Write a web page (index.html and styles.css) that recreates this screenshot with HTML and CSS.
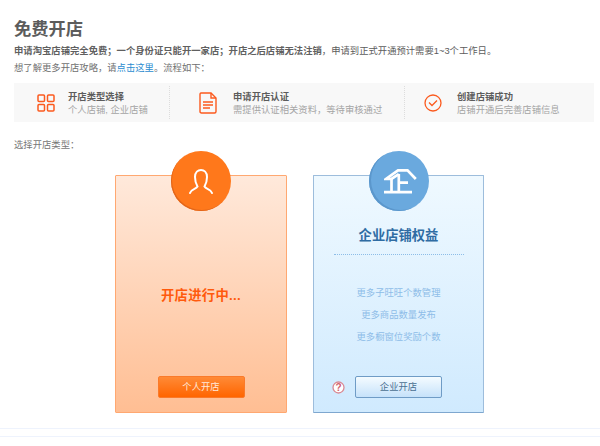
FILE: index.html
```html
<!DOCTYPE html>
<html lang="zh-CN">

<head>
    <meta charset="UTF-8">
    <title>免费开店</title>
    <link rel="stylesheet" href="styles.css">
</head>

<body>
    <div class="page">
        <h1 class="pageTitle">免费开店</h1>
        <p class="intro"><b>申请淘宝店铺完全免费；一个身份证只能开一家店；开店之后店铺无法注销</b>，申请到正式开通预计需要1~3个工作日。</p>
        <p class="intro introGuide">想了解更多开店攻略，请<a href="#">点击这里</a>。流程如下：</p>

        <div class="steps">
            <div class="step stepType">
                <svg class="stepIcon" width="18" height="18" viewBox="0 0 18 18" fill="none" stroke="#fb5a1e" stroke-width="1.5">
                    <rect x="1" y="1" width="6.5" height="6.5" rx="1"></rect>
                    <rect x="10.5" y="1" width="6.5" height="6.5" rx="1"></rect>
                    <rect x="1" y="10.5" width="6.5" height="6.5" rx="1"></rect>
                    <rect x="10.5" y="10.5" width="6.5" height="6.5" rx="1"></rect>
                </svg>
                <div class="stepText">
                    <div class="stepName">开店类型选择</div>
                    <div class="stepDesc">个人店铺, 企业店铺</div>
                </div>
            </div>
            <div class="step stepApply">
                <svg class="stepIcon" width="18" height="22" viewBox="0 0 18 22" fill="none" stroke="#fb5a1e" stroke-width="1.4">
                    <path d="M2 1H12L17 6V19.5Q17 21 15.500 21H2.500Q1 21 1 19.5V2.500Q1 1 2 1Z"></path>
                    <path d="M12 1V6H17"></path>
                    <path d="M4 10H14M4 13H14M4 16H11"></path>
                </svg>
                <div class="stepText">
                    <div class="stepName">申请开店认证</div>
                    <div class="stepDesc">需提供认证相关资料，等待审核通过</div>
                </div>
            </div>
            <div class="step stepDone">
                <svg class="stepIcon" width="18" height="18" viewBox="0 0 18 18" fill="none" stroke="#fb5a1e" stroke-width="1.3">
                    <circle cx="9" cy="9" r="8"></circle>
                    <path d="M5 8.500L8 11.500L13 6.500"></path>
                </svg>
                <div class="stepText">
                    <div class="stepName">创建店铺成功</div>
                    <div class="stepDesc">店铺开通后完善店铺信息</div>
                </div>
            </div>
        </div>

        <p class="chooseLabel">选择开店类型：</p>

        <div class="cards">
            <div class="card personal">
                <div class="cardBadge">
                    <svg width="24" height="25" viewBox="0 0 24 25" fill="none" stroke="#fff" stroke-width="2" stroke-linecap="round">
                        <path d="M1 24C2 20 7 20.500 8.500 17.500C7 15 6 12 6 8C6 3 9 1 12 1C15 1 18 3 18 8C18 12 17 15 15.500 17.500C17 20.500 22 20 23 24"></path>
                    </svg>
                </div>
                <div class="progress">开店进行中...</div>
                <div class="cardAction">
                    <a class="openBtn personalBtn" href="#">个人开店</a>
                </div>
            </div>
            <div class="card company">
                <div class="cardBadge">
                    <svg class="companyMark" width="33" height="25" viewBox="0 0 33 25" fill="none" stroke="#fff" stroke-width="2.700">
                        <path d="M31.800 10L23.500 1.400H14L2 10H7.500L14.800 5.200"></path>
                        <path d="M14.800 5V22.500M14.800 13.700H24M7.500 10V22.500M0 23.200H28"></path>
                    </svg>
                </div>
                <h2 class="companyTitle">企业店铺权益</h2>
                <ul class="perks">
                    <li>更多子旺旺个数管理</li>
                    <li>更多商品数量发布</li>
                    <li>更多橱窗位奖励个数</li>
                </ul>
                <div class="cardAction">
                    <svg class="helpIcon" width="13" height="13" viewBox="0 0 13 13">
                        <circle cx="6.500" cy="6.500" r="5.500" fill="#fff" stroke="#d98a94" stroke-width="1.300"></circle>
                        <text x="6.500" y="9.800" text-anchor="middle" class="helpMark">?</text>
                    </svg>
                    <a class="openBtn companyBtn" href="#">企业开店</a>
                </div>
            </div>
        </div>
    </div>
    <div class="footerLines"></div>
</body>

</html>
```

FILE: styles.css
```css
* {
    box-sizing: border-box;
    padding: 0;
    margin: 0;
}

body {
    background: #fff;
    color: #666;
    font-family: "Liberation Sans", "Noto Sans CJK SC", sans-serif;
    font-size: 9.33px;
    overflow: hidden;
}

a {
    text-decoration: none;
}

.page {
    padding: 17px 6px 0 14px;
}

.pageTitle {
    font-size: 17.3px;
    line-height: 24px;
    color: #5c5c5c;
}

.intro {
    margin-top: 3px;
    line-height: 14px;
    color: #5c5c5c;
}

.intro b {
    color: #606060;
}

.introGuide {
    margin-top: 3px;
    color: #707070;
}

.introGuide a {
    color: #2b8cd0;
}

.steps {
    display: flex;
    height: 39px;
    margin-top: 8px;
    padding: 3px 0;
    background: #f8f8f8;
}

.step {
    display: flex;
    align-items: center;
    height: 33px;
    line-height: 13px;
}

.stepType {
    width: 156px;
    padding-left: 23px;
    border-right: 1px dotted #ddd;
}

.stepApply {
    width: 235px;
    padding-left: 29px;
    border-right: 1px dotted #ddd;
}

.stepDone {
    padding-left: 19px;
}

.stepIcon {
    margin-right: 13px;
    flex-shrink: 0;
}

.stepApply .stepIcon {
    margin-right: 16px;
}

.stepDone .stepIcon {
    margin-right: 15px;
}

.stepText {
    margin-top: 2px;
}

.stepName {
    font-weight: 700;
    color: #5c5c5c;
}

.stepDesc {
    color: #a5a5a5;
}

.chooseLabel {
    margin-top: 16px;
    line-height: 14px;
    color: #777;
}

.cards {
    display: flex;
    gap: 26px;
    margin-top: 23px;
    padding-left: 101px;
}

.card {
    position: relative;
    display: flex;
    flex-direction: column;
    align-items: center;
    width: 172px;
    height: 238px;
    border: 1px solid;
    border-radius: 1px;
}

.personal {
    background: linear-gradient(to bottom, #ffe9db, #ffbe93);
    border-color: #ffa871;
}

.company {
    width: 171px;
    background: linear-gradient(to bottom, #eff9ff, #d0eafe);
    border-color: #9dbddc;
    border-bottom-color: #7ea7cf;
}

.cardBadge {
    position: absolute;
    top: -25px;
    left: 55px;
    display: flex;
    align-items: center;
    justify-content: center;
    width: 60px;
    height: 60px;
    border-radius: 50%;
}

.personal .cardBadge {
    background: #ff781b;
    box-shadow: inset 1px -1px 0 #e2661a;
}

.company .cardBadge {
    background: #6aa9de;
    box-shadow: inset 2px -1px 0 #5b97cc;
}

.companyMark {
    margin-left: 3px;
}

.progress {
    margin-top: 110px;
    font-size: 13.3px;
    font-weight: 700;
    line-height: 20px;
    letter-spacing: 0.3px;
    color: #ff5a0c;
}

.companyTitle {
    width: 130px;
    margin-top: 50px;
    padding-bottom: 8px;
    border-bottom: 1px dotted #8dbde8;
    text-align: center;
    font-size: 13.3px;
    line-height: 20px;
    color: #2f6ca3;
}

.perks {
    margin-top: 27px;
    list-style: none;
    text-align: center;
    line-height: 22px;
    color: #8ebde8;
}

.cardAction {
    position: absolute;
    left: 0;
    right: 0;
    top: 200px;
    display: flex;
    justify-content: center;
}

.openBtn {
    display: block;
    width: 87px;
    height: 22px;
    line-height: 20px;
    border: 1px solid;
    border-radius: 2px;
    text-align: center;
}

.personalBtn {
    background: linear-gradient(to bottom, #ff8a36, #ff6500);
    border-color: #fa7a2a;
    color: #ffe9da;
}

.companyBtn {
    background: linear-gradient(to bottom, #f4fbff, #c6e2fa);
    border-color: #6f9cc6;
    color: #4a6f92;
}

.company .cardAction {
    justify-content: flex-start;
    align-items: center;
    padding-left: 18px;
}

.helpIcon {
    margin-right: 10px;
}

.helpMark {
    font-size: 10px;
    font-weight: 700;
    fill: #d0606e;
}

.footerLines {
    height: 9px;
    margin-top: 15px;
    border-top: 1px solid #eef3fd;
    border-bottom: 1px solid #eef3fd;
}
```
